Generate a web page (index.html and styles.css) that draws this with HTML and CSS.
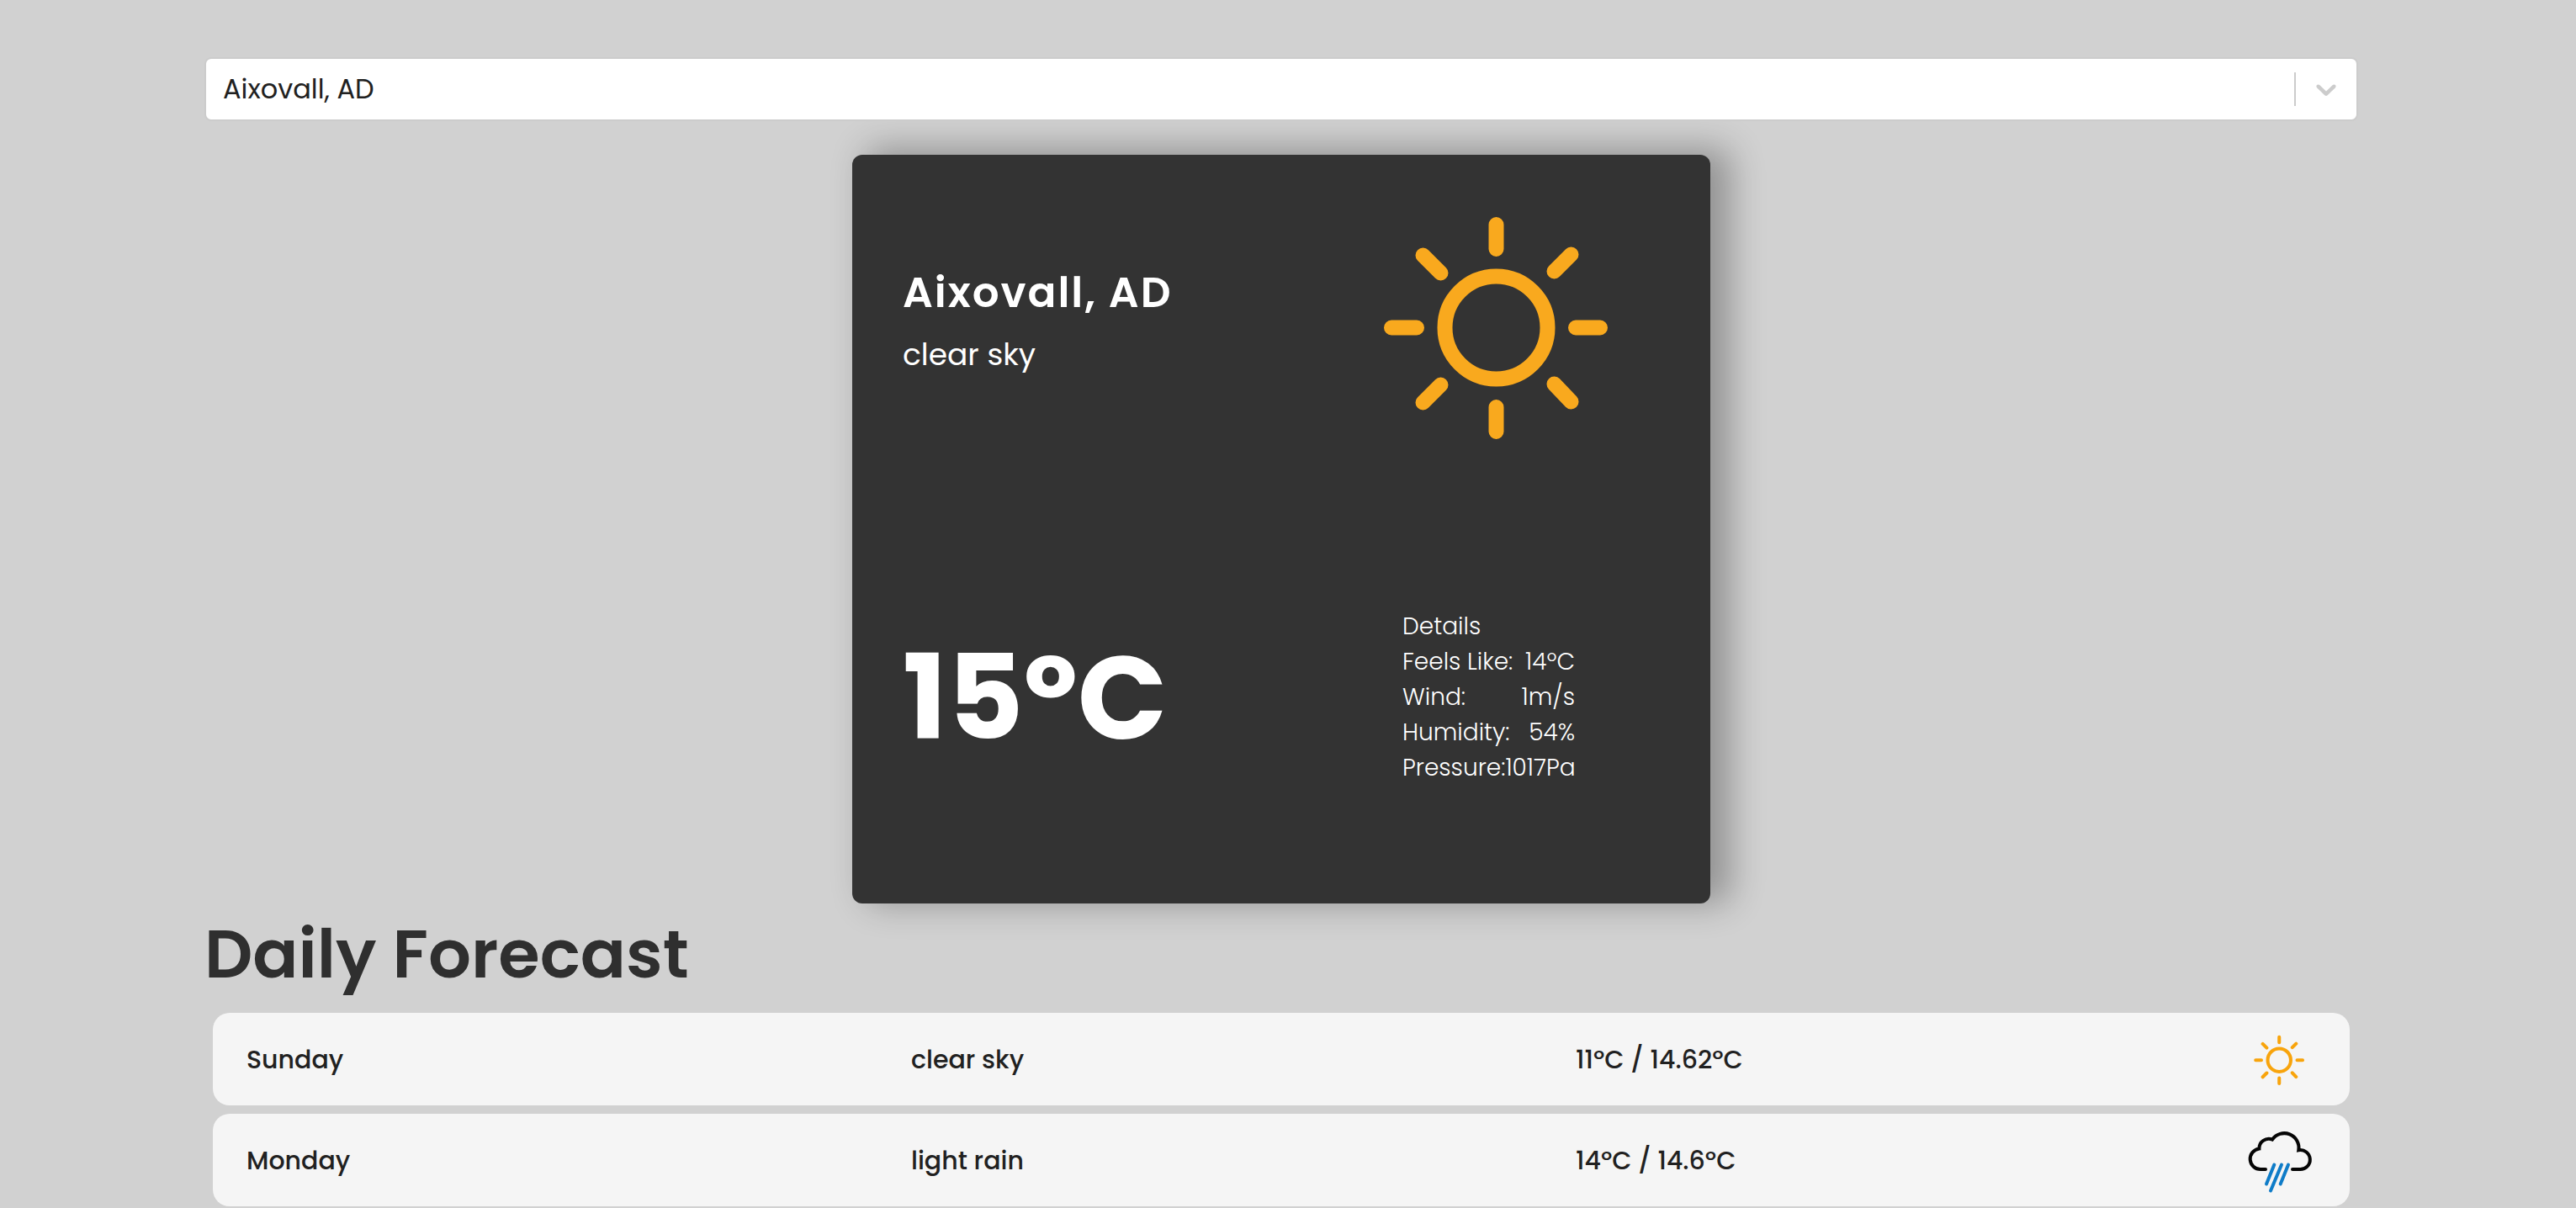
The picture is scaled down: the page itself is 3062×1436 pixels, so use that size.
FILE: index.html
```html
<!DOCTYPE html>
<html lang="en">
<head>
<meta charset="utf-8">
<meta name="viewport" content="width=device-width, initial-scale=1">
<title>Weather in Aixovall, AD</title>
<link rel="stylesheet" href="styles.css">
</head>
<body>
<svg class="sprite" aria-hidden="true">
  <symbol id="icon-sun" viewBox="0 0 400 400">
    <g fill="none" stroke="currentColor" stroke-width="18" stroke-linecap="round">
      <circle cx="205.5" cy="205.5" r="61"/>
      <path d="M205.5 83v29M205.5 300v29M81 205.5h30M300 205.5h29M118.500 119.500l21 21M294.500 118.500l-20 20M118.500 294.500l21-21M294.500 293.500l-20-21"/>
    </g>
  </symbol>
  <symbol id="icon-rain" viewBox="0 0 90 90">
    <g fill="none" stroke-width="4">
      <path stroke="#050505" stroke-linecap="round" stroke-linejoin="miter" d="M30 56H24A12.3 12.3 0 0 1 22.4 31.5A11.4 11.4 0 0 1 38 20.6A17.3 17.3 0 0 1 69.3 33.2A11.5 11.5 0 1 1 70.7 56H62"/>
      <path stroke="#0f7cc8" stroke-linecap="round" d="M40.3 50.5L31 73.5M49 50.5L36 81.5M57 50.5L47.7 73.5"/>
    </g>
  </symbol>
</svg>
<main class="page">
  <div class="search">
    <select class="search-select" aria-label="City">
      <option>Aixovall, AD</option>
    </select>
    <span class="search-indicator" aria-hidden="true">
      <svg class="search-chevron" viewBox="0 0 20 20"><path d="M4.516 7.548c0.436-0.446 1.043-0.481 1.576 0l3.908 3.747 3.908-3.747c0.533-0.481 1.141-0.446 1.574 0 0.436 0.445 0.408 1.197 0 1.615-0.406 0.418-4.695 4.502-4.695 4.502-0.217 0.223-0.502 0.335-0.787 0.335s-0.57-0.112-0.789-0.335c0 0-4.287-4.084-4.695-4.502s-0.436-1.17 0-1.615z"/></svg>
    </span>
  </div>

  <section class="weather">
    <div class="place">
      <p class="city">Aixovall, AD</p>
      <p class="description">clear sky</p>
    </div>
    <svg class="weather-icon" role="img" aria-label="clear sky"><use href="#icon-sun"/></svg>
    <p class="temperature">15ºC</p>
    <dl class="details">
      <div class="detail"><dt>Details</dt></div>
      <div class="detail"><dt>Feels Like:</dt><dd>14ºC</dd></div>
      <div class="detail"><dt>Wind:</dt><dd>1m/s</dd></div>
      <div class="detail"><dt>Humidity:</dt><dd>54%</dd></div>
      <div class="detail"><dt>Pressure:</dt><dd>1017Pa</dd></div>
    </dl>
  </section>

  <h1 class="title">Daily Forecast</h1>
  <div class="forecast">
    <button class="day" type="button">
      <span class="day-cell">Sunday</span>
      <span class="day-cell">clear sky</span>
      <span class="day-cell">11ºC / 14.62ºC</span>
      <svg class="day-icon day-icon-sun" aria-hidden="true"><use href="#icon-sun"/></svg>
    </button>
    <button class="day" type="button">
      <span class="day-cell">Monday</span>
      <span class="day-cell">light rain</span>
      <span class="day-cell">14ºC / 14.6ºC</span>
      <svg class="day-icon" aria-hidden="true"><use href="#icon-rain"/></svg>
    </button>
  </div>
</main>
</body>
</html>
```
FILE: styles.css
```css
* {
  box-sizing: border-box;
}

body {
  margin: 0 16px 0 0;
  font-family: "Poppins", "Inter", sans-serif;
  line-height: 1.5;
  color: #212529;
}

html {
  background: #d1d1d1;
}

p,
h1,
dl,
dd {
  margin: 0;
}

.sprite {
  display: none;
}

.page {
  width: 90%;
  max-width: 2560px;
  margin: 0 auto;
  padding-top: 68px;
}

/* City picker */
.search {
  position: relative;
  z-index: 1;
}

.search-select {
  display: block;
  width: 100%;
  height: 76px;
  padding: 0 120px 0 20px;
  appearance: none;
  border: 2px solid #cccccc;
  border-radius: 8px;
  background: #ffffff;
  font: inherit;
  font-size: 32px;
  color: #212121;
}

.search-indicator {
  position: absolute;
  top: 18px;
  bottom: 18px;
  right: 2px;
  display: flex;
  align-items: center;
  padding: 0 16px;
  border-left: 2px solid #cccccc;
  pointer-events: none;
}

.search-chevron {
  width: 40px;
  height: 40px;
  fill: #cccccc;
}

/* Current weather */
.weather {
  display: grid;
  grid-template-columns: 1fr 400px;
  grid-template-rows: 400px 490px;
  align-items: center;
  max-width: 1020px;
  margin: 40px auto 0;
  padding: 0 60px;
  border-radius: 12px;
  background: #333333;
  color: #ffffff;
  box-shadow: 20px -4px 40px 4px rgba(0, 0, 0, 0.3);
}

.place {
  display: grid;
  gap: 10px;
  padding-bottom: 10px;
}

.city {
  font-size: 50px;
  font-weight: 600;
  letter-spacing: 2px;
}

.description {
  font-size: 36px;
}

.weather-icon {
  width: 400px;
  height: 400px;
  color: #f9a91e;
}

.temperature {
  font-size: 140px;
  font-weight: 700;
  line-height: 1;
}

.details {
  width: 205px;
  margin-left: 94px;
  font-size: 28px;
  font-weight: 300;
}

.detail {
  display: flex;
  justify-content: space-between;
}

/* Daily forecast */
.title {
  font-size: 80px;
  font-weight: 600;
  color: #2f2f2f;
}

.forecast {
  display: grid;
  gap: 10px;
  padding: 10px;
}

.day {
  display: flex;
  align-items: center;
  padding: 10px 40px;
  border: 0;
  border-radius: 20px;
  background: #f5f5f5;
  font: inherit;
  font-size: 30px;
  font-weight: 500;
  text-align: left;
  color: #212121;
}

.day-cell {
  flex: 1;
}

.day-icon {
  width: 90px;
  height: 90px;
}

.day-icon-sun {
  color: #f8a40c;
}
```
